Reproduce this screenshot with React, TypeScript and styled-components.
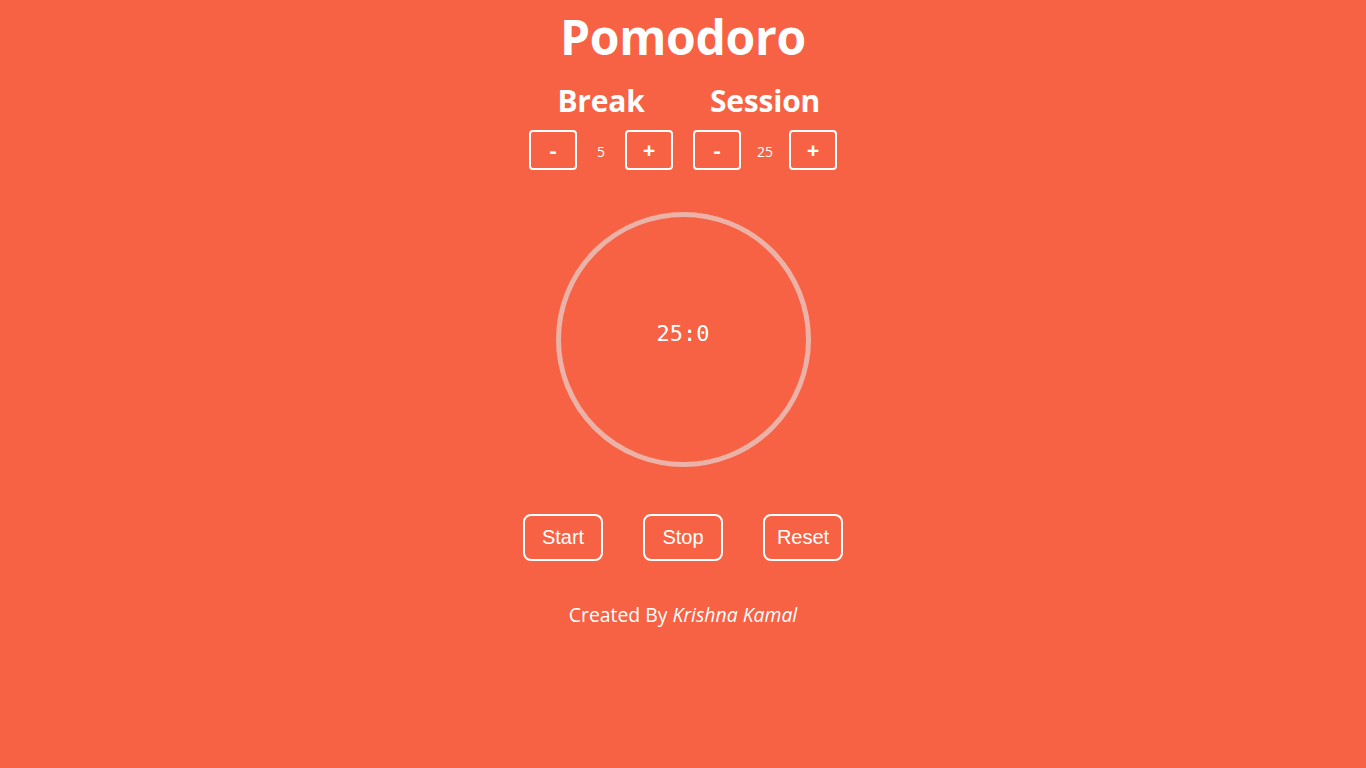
import React from "react";
import styled, { createGlobalStyle } from "styled-components";

const Global = createGlobalStyle`
  html, body { margin: 0; padding: 0; background: #f66243; }
  body { font-family: "Open Sans", "Noto Sans", sans-serif; color: #fff; }
`;

const Page = styled.div`
  min-height: 768px;
  display: flex;
  flex-direction: column;
  align-items: center;
  background: #f66243;
`;

const Title = styled.h1`
  margin: 5px 0 0;
  font-size: 48px;
  font-weight: 700;
  line-height: 64px;
  letter-spacing: -0.3px;
`;

const Settings = styled.div`
  display: flex;
  gap: 20px;
  margin-top: 14px;
`;

const Group = styled.div`
  display: flex;
  flex-direction: column;
  align-items: center;
  width: 144px;
`;

const Label = styled.h2`
  margin: 0;
  font-size: 30px;
  font-weight: 700;
  line-height: 36px;
  letter-spacing: -0.2px;
`;

const Controls = styled.div`
  display: grid;
  grid-template-columns: 48px 48px 48px;
  align-items: center;
  margin-top: 11px;
`;

const SmallButton = styled.button`
  width: 48px;
  height: 40px;
  box-sizing: border-box;
  border: 2px solid #fff;
  border-radius: 4px;
  background: transparent;
  color: #fff;
  font-family: "Open Sans", sans-serif;
  font-size: 22px;
  font-weight: 700;
  line-height: 1;
  padding: 0 0 3px;
  cursor: pointer;
`;

const Value = styled.span`
  text-align: center;
  font-size: 14px;
  padding-top: 3px;
`;

const Ring = styled.div`
  margin-top: 42px;
  width: 255px;
  height: 255px;
  box-sizing: border-box;
  border: 5px solid #ecb2a8;
  border-radius: 50%;
  display: flex;
  align-items: center;
  justify-content: center;
`;

const Time = styled.span`
  font-family: "DejaVu Sans Mono", "Liberation Mono", monospace;
  font-size: 22px;
  font-weight: 400;
  margin-top: -13px;
`;

const Actions = styled.div`
  display: flex;
  gap: 40px;
  margin-top: 47px;
`;

const ActionButton = styled.button`
  width: 80px;
  height: 47px;
  box-sizing: border-box;
  border: 2px solid #fff;
  border-radius: 8px;
  background: transparent;
  color: #fff;
  font-family: "Liberation Sans", Arial, sans-serif;
  font-size: 20px;
  cursor: pointer;
`;

const Footer = styled.p`
  margin: 40px 0 0;
  font-size: 19.4px;
  line-height: 28px;
  em { font-style: italic; }
`;

export default function App() {
  return (
    <Page>
      <Global />
      <Title>Pomodoro</Title>
      <Settings>
        <Group>
          <Label>Break</Label>
          <Controls>
            <SmallButton>-</SmallButton>
            <Value>5</Value>
            <SmallButton>+</SmallButton>
          </Controls>
        </Group>
        <Group>
          <Label>Session</Label>
          <Controls>
            <SmallButton>-</SmallButton>
            <Value>25</Value>
            <SmallButton>+</SmallButton>
          </Controls>
        </Group>
      </Settings>
      <Ring>
        <Time>25:0</Time>
      </Ring>
      <Actions>
        <ActionButton>Start</ActionButton>
        <ActionButton>Stop</ActionButton>
        <ActionButton>Reset</ActionButton>
      </Actions>
      <Footer>
        Created By <em>Krishna Kamal</em>
      </Footer>
    </Page>
  );
}
